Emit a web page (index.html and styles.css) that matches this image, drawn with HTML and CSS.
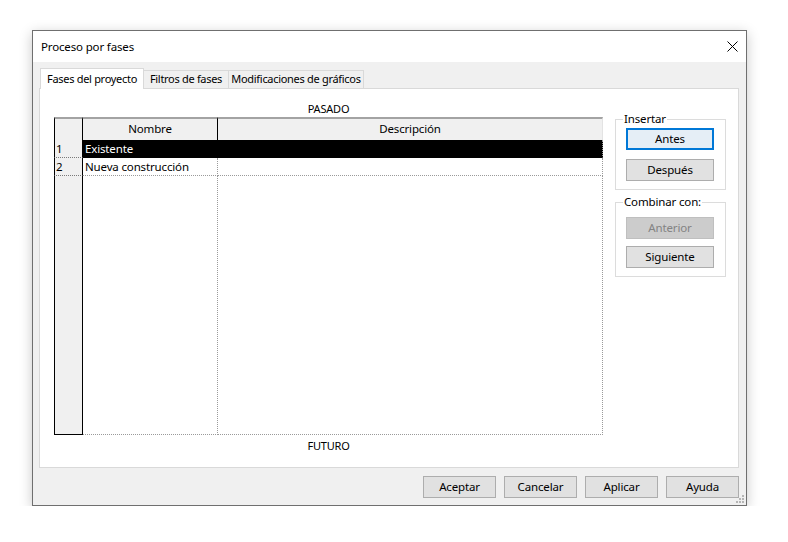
FILE: index.html
```html
<!DOCTYPE html>
<html lang="es">
<head>
<meta charset="utf-8">
<title>Proceso por fases</title>
<link rel="stylesheet" href="styles.css">
</head>
<body>
<div class="desktop">
  <div class="window">
    <div class="titlebar">
      <span class="title">Proceso por fases</span>
      <svg class="close" width="11" height="11" viewBox="0 0 11 11"><path d="M0.5 0.5 L10.5 10.5 M10.5 0.5 L0.5 10.5" stroke="#000" stroke-width="1" fill="none"/></svg>
    </div>
    <div class="content">
      <div class="tabs">
        <div class="tab tab-active">Fases del proyecto</div>
        <div class="tab tab-2">Filtros de fases</div>
        <div class="tab tab-3">Modificaciones de gráficos</div>
      </div>
      <div class="panel">
        <div class="main">
          <div class="label">PASADO</div>
          <div class="grid">
            <div class="c c1 hd"></div>
            <div class="c c2 hd center">Nombre</div>
            <div class="c c3 hd center">Descripción</div>

            <div class="c c1 num">1</div>
            <div class="c c2 sel">Existente</div>
            <div class="c c3 sel"></div>

            <div class="c c1 num">2</div>
            <div class="c c2 row">Nueva construcción</div>
            <div class="c c3 row"></div>

            <div class="c c1 fill1"></div>
            <div class="c c2 fill"></div>
            <div class="c c3 fill"></div>
          </div>
          <div class="label label-bottom">FUTURO</div>
        </div>
        <div class="side">
          <div class="group group-insert">
            <span class="group-title">Insertar</span>
            <button class="btn btn-focus">Antes</button>
            <button class="btn btn-second">Después</button>
          </div>
          <div class="group group-merge">
            <span class="group-title">Combinar con:</span>
            <button class="btn btn-disabled" disabled>Anterior</button>
            <button class="btn btn-third">Siguiente</button>
          </div>
        </div>
      </div>
      <div class="footer">
        <button class="btn btn-foot">Aceptar</button>
        <button class="btn btn-foot">Cancelar</button>
        <button class="btn btn-foot">Aplicar</button>
        <button class="btn btn-foot">Ayuda</button>
      </div>
    </div>
    <svg class="grip" width="8" height="8" viewBox="0 0 8 8">
      <rect x="6" y="0" width="2" height="2" fill="#b5b5b5"/>
      <rect x="3" y="3" width="2" height="2" fill="#b5b5b5"/>
      <rect x="6" y="3" width="2" height="2" fill="#b5b5b5"/>
      <rect x="0" y="6" width="2" height="2" fill="#b5b5b5"/>
      <rect x="3" y="6" width="2" height="2" fill="#b5b5b5"/>
      <rect x="6" y="6" width="2" height="2" fill="#b5b5b5"/>
    </svg>
  </div>
</div>
</body>
</html>
```
FILE: styles.css
```css
* { box-sizing: border-box; }

body {
  margin: 0;
  background: #ffffff;
  font-family: "Noto Sans", "Open Sans", "DejaVu Sans", sans-serif;
  font-size: 11.5px;
  letter-spacing: -0.15px;
  color: #000;
}

.desktop {
  padding: 30px 0 0 32px;
}

.window {
  position: relative;
  width: 715px;
  height: 476px;
  border: 1px solid #6f6f6f;
  background: #f0f0f0;
  box-shadow: 0 3px 12px rgba(0, 0, 0, 0.22);
  display: flex;
  flex-direction: column;
}

.titlebar {
  height: 31px;
  background: #ffffff;
  display: flex;
  align-items: center;
  justify-content: space-between;
  padding: 0 8px 0 8px;
  flex-shrink: 0;
}

.title {
  line-height: 16px;
  font-size: 11.5px;
}

.close {
  display: block;
  margin-top: -1px;
}

.content {
  padding: 6px 7px 0 6px;
  display: flex;
  flex-direction: column;
}

.tabs {
  display: flex;
  align-items: flex-end;
  height: 21px;
  margin-bottom: -1px;
  padding-left: 1px;
  position: relative;
  z-index: 1;
}

.tab {
  height: 18px;
  margin-bottom: 1px;
  border: 1px solid #d9d9d9;
  border-bottom: none;
  background: #f0f0f0;
  line-height: 16px;
  text-align: center;
  white-space: nowrap;
  font-size: 11px;
  letter-spacing: -0.3px;
}

.tab-active {
  width: 104px;
  height: 21px;
  margin-bottom: 0;
  background: #ffffff;
  line-height: 17px;
  padding-top: 1px;
}

.tab-2 {
  width: 85px;
  border-left: none;
}

.tab-3 {
  width: 136px;
  margin-left: -1px;
}

.panel {
  height: 380px;
  border: 1px solid #d9d9d9;
  background: #ffffff;
  display: flex;
  gap: 12px;
  padding: 12px 0 0 14px;
}

.main {
  width: 549px;
  display: flex;
  flex-direction: column;
}

.label {
  height: 16px;
  line-height: 16px;
  text-align: center;
  font-size: 11px;
  letter-spacing: -0.2px;
}

.label-bottom {
  margin-top: 3px;
}

.grid {
  display: grid;
  grid-template-columns: 29px 135px 385px;
  grid-template-rows: 23px 18px 18px 1fr;
  height: 318px;
}

.c {
  white-space: nowrap;
  overflow: hidden;
  padding-left: 2px;
  line-height: 17px;
}

.center {
  text-align: center;
  padding-left: 0;
}

.hd {
  background: #f0f0f0;
  border-top: 2px solid #a3a3a3;
  line-height: 20px;
}

.c1 {
  background: #f0f0f0;
  border-left: 1px solid #000;
  border-right: 1px solid #000;
}

.c2 {
  border-right: 1px dotted #9a9a9a;
}

.c3 {
  border-right: 1px dotted #9a9a9a;
}

.hd.c2 {
  border-right: 1px solid #000;
}

.hd.c3 {
  border-right: 1px solid #e3e3e3;
}

.num {
  border-bottom: 1px dotted #7a7a7a;
  padding-left: 1px;
}

.sel {
  background: #000;
  color: #fff;
  border-bottom: 1px dotted #000;
}

.sel.c2 {
  border-right-color: #000;
}

.row {
  border-bottom: 1px dotted #9a9a9a;
}

.fill1 {
  border-bottom: 1px solid #000;
}

.fill {
  border-bottom: 1px dotted #9a9a9a;
}

.side {
  width: 111px;
  padding-top: 18px;
}

.group {
  border: 1px solid #dcdcdc;
  padding: 0 10px 8px 10px;
}

.group-title {
  display: block;
  width: fit-content;
  height: 14px;
  line-height: 14px;
  margin: -8px 0 0 -3px;
  padding: 0 1px;
  background: #ffffff;
}

.group-merge {
  margin-top: 12px;
}

.btn {
  display: block;
  width: 88px;
  height: 22px;
  padding: 0;
  margin: 0;
  border: 1px solid #adadad;
  background: #e1e1e1;
  font-family: inherit;
  font-size: 11.5px;
  letter-spacing: -0.15px;
  color: #000;
  line-height: 18px;
  text-align: center;
}

.btn-focus {
  margin-top: 2px;
  border-color: #0078d7;
  box-shadow: inset 0 0 0 1px #0078d7;
  background: #e5eef6;
}

.btn-second {
  margin-top: 9px;
}

.group-merge .btn-disabled {
  margin-top: 8px;
  background: #cccccc;
  border-color: #bfbfbf;
  color: #838383;
}

.btn-third {
  margin-top: 7px;
}

.footer {
  display: flex;
  justify-content: flex-end;
  gap: 8px;
  margin-top: 8px;
}

.btn-foot {
  width: 73px;
}

.grip {
  position: absolute;
  right: 2px;
  bottom: 2px;
}
```
